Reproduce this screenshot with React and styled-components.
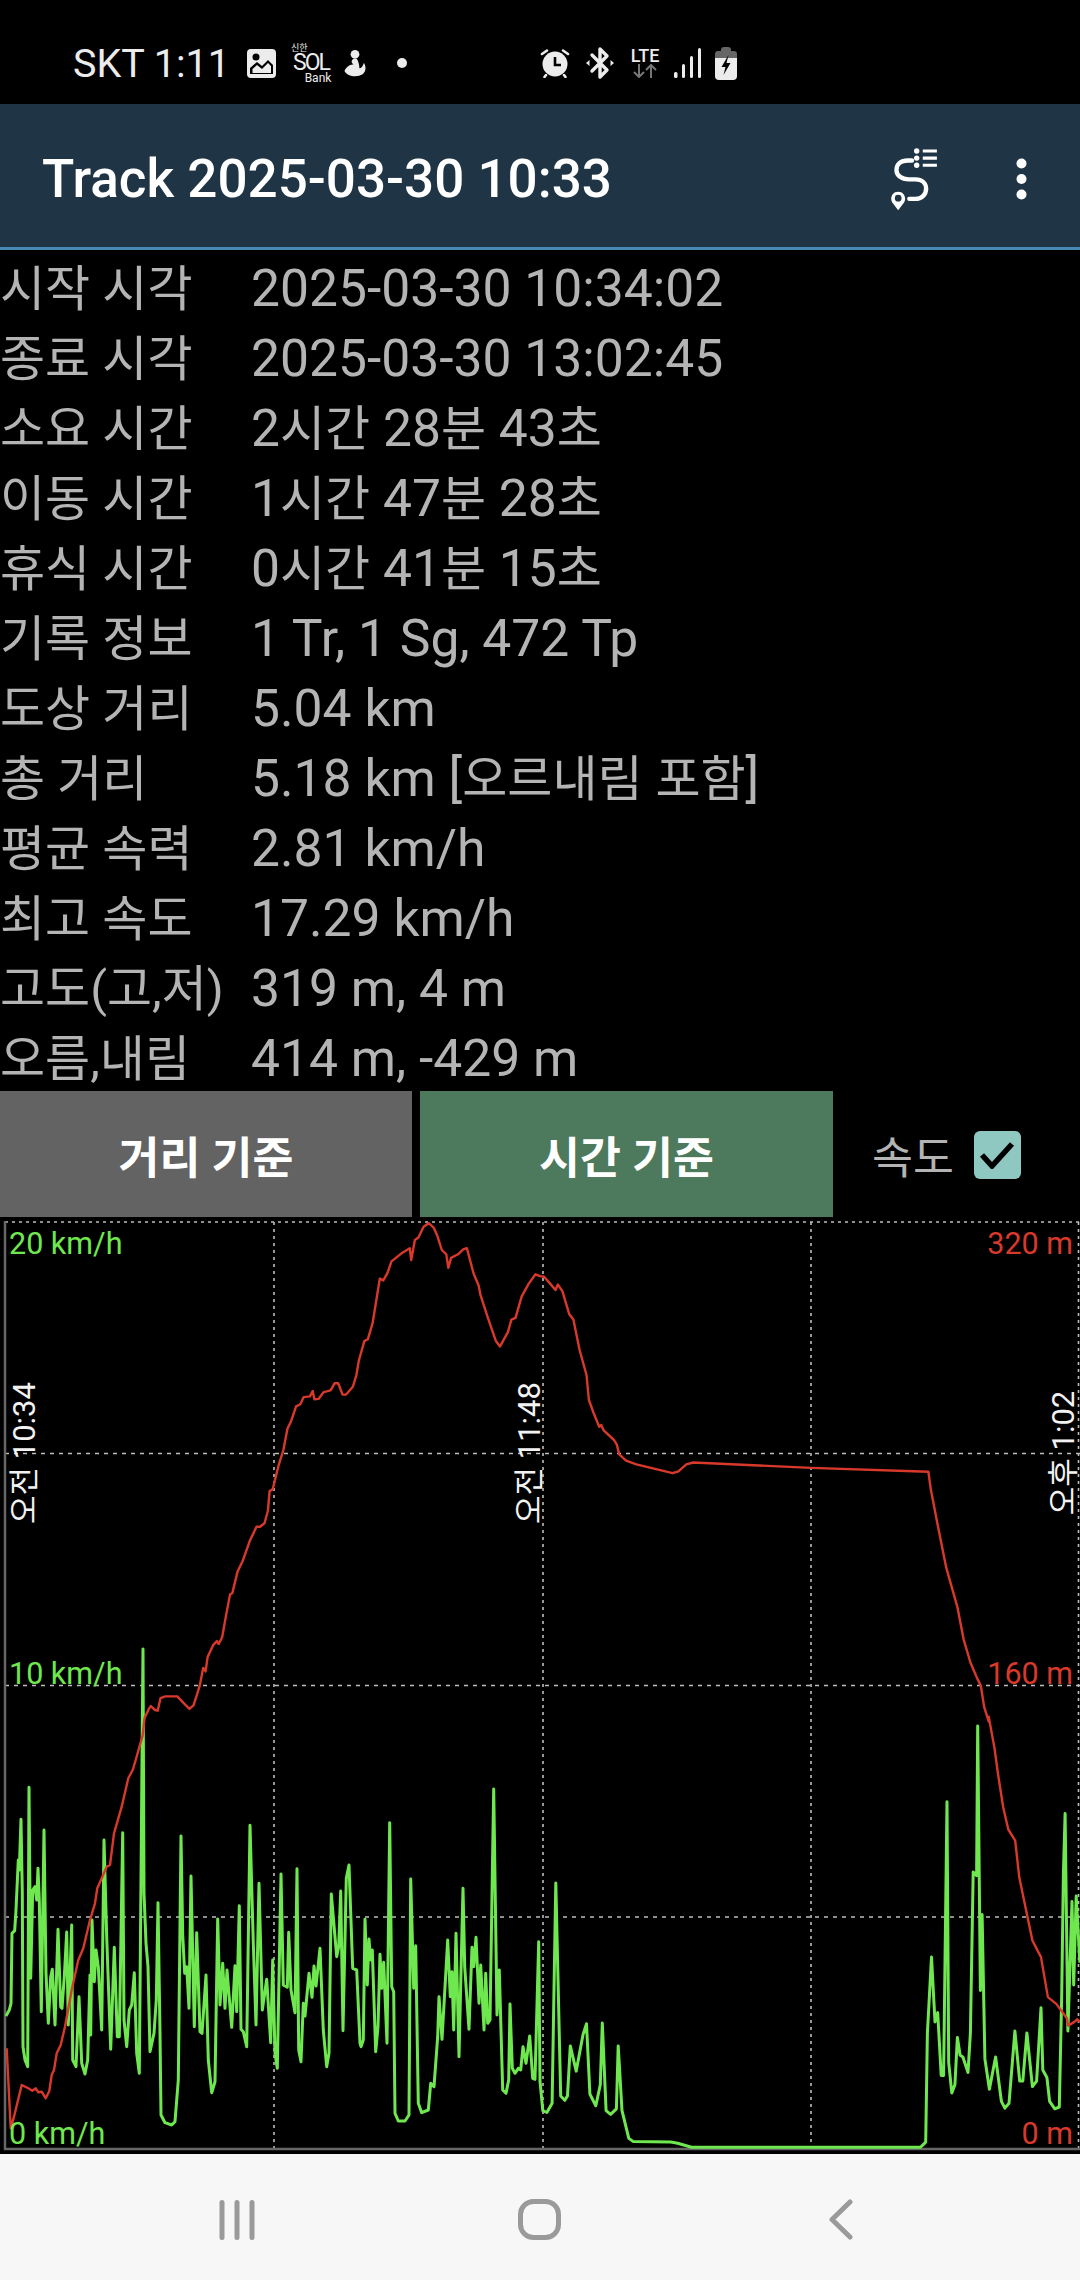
import React from 'react';
import styled, { createGlobalStyle } from 'styled-components';

const GlobalStyle = createGlobalStyle`
  html, body {
    margin: 0;
    padding: 0;
    background: #000;
  }
  body {
    font-family: Roboto, "Noto Sans CJK KR", sans-serif;
  }
`;

const Screen = styled.div`
  width: 1080px;
  height: 2280px;
  display: flex;
  flex-direction: column;
  background: #000;
  overflow: hidden;
`;

/* status bar */
const StatusBar = styled.div`
  height: 104px;
  box-sizing: border-box;
  flex: none;
  display: flex;
  align-items: center;
  padding: 22px 0 0 73px;
  color: #ececec;
`;

const StatusLeft = styled.div`
  width: 467px;
  display: flex;
  align-items: center;
`;

const StatusRight = styled.div`
  display: flex;
  align-items: center;
`;

const Clock = styled.span`
  font-size: 39.5px;
  width: 174px;
  white-space: nowrap;
`;

const SolLogo = styled.div`
  width: 56px;
  margin: 0 0 0 10px;
  display: flex;
  flex-direction: column;
  align-items: center;
`;

const SolTop = styled.span`
  font-size: 9px;
  line-height: 10px;
  align-self: flex-start;
  margin-left: 5px;
`;

const SolMid = styled.span`
  font-size: 23px;
  line-height: 19px;
  letter-spacing: -2px;
  margin-left: -6px;
`;

const SolBottom = styled.span`
  font-size: 12px;
  line-height: 12px;
  margin-left: 8px;
`;

const LteBox = styled.div`
  width: 30px;
  margin: 0 14px 0 16px;
  display: flex;
  flex-direction: column;
  align-items: center;
`;

const LteText = styled.span`
  font-size: 18px;
  font-weight: 500;
  line-height: 16px;
`;

/* app bar */
const AppBar = styled.header`
  height: 143px;
  flex: none;
  box-sizing: content-box;
  display: flex;
  align-items: center;
  justify-content: space-between;
  padding-left: 42px;
  background: #1f3546;
  border-bottom: 3px solid #4788b4;
`;

const Title = styled.h1`
  margin: 6px 0 0;
  font-size: 53px;
  font-weight: 500;
  color: #fff;
  white-space: nowrap;
`;

const Actions = styled.div`
  display: flex;
  align-items: center;
  gap: 78px;
  padding: 6px 53px 0 0;
`;

/* info table */
const InfoTable = styled.div`
  flex: none;
  box-sizing: border-box;
  height: 840px;
  padding-top: 4px;
  display: grid;
  grid-template-columns: 251px 1fr;
  grid-auto-rows: 70px;
  align-items: baseline;
  color: #b4b4b4;
  line-height: 70px;
  white-space: nowrap;
`;

const Label = styled.span`
  font-size: 49px;
`;

const Value = styled.span`
  font-size: 51.6px;
`;

// 한글은 숫자보다 글자 크기가 약간 작다
const Hangul = styled.span`
  font-size: 49px;
  line-height: 0;
`;

/* mode buttons */
const ModeRow = styled.div`
  height: 126px;
  flex: none;
  display: flex;
  gap: 8px;
  margin-top: 1px;
`;

const ModeButton = styled.button`
  width: ${(p) => (p.$active ? 413 : 412)}px;
  border: 0;
  padding: 0;
  background: ${(p) => (p.$active ? '#4d795c' : '#636363')};
  color: #fff;
  font-family: inherit;
  font-size: 44.5px;
  font-weight: 700;
`;

const SpeedToggle = styled.div`
  display: flex;
  align-items: center;
  margin-left: 31px;
  gap: 20px;
  color: #b4b4b4;
  font-size: 44.5px;
`;

const CheckBox = styled.span`
  width: 47px;
  height: 48px;
  margin-top: 2px;
  border-radius: 6px;
  background: #8fc7c1;
  display: flex;
  align-items: center;
  justify-content: center;
`;

/* chart */
const ChartBox = styled.div`
  position: relative;
  width: 1080px;
  height: 933px;
  flex: none;
  margin-top: 4px;
`;

const ChartSvg = styled.svg`
  display: block;
`;

const AxisLabel = styled.span`
  position: absolute;
  top: ${(p) => p.$top}px;
  ${(p) => (p.$right ? 'right: 7px;' : 'left: 9px;')}
  color: ${(p) => (p.$right ? '#d8392b' : '#6fe84f')};
  font-size: 30.5px;
  line-height: 36px;
  white-space: nowrap;
`;

const TimeLabel = styled.span`
  position: absolute;
  top: 232px;
  left: ${(p) => p.$left}px;
  color: #f2f2f2;
  font-size: 31px;
  line-height: 29px;
  white-space: nowrap;
  transform: translateY(-50%) rotate(180deg);
  writing-mode: vertical-rl;
  text-orientation: sideways;
`;

/* navigation bar */
const NavBar = styled.nav`
  flex: 1;
  display: grid;
  grid-template-columns: repeat(3, 302px);
  justify-content: center;
  justify-items: center;
  align-items: center;
  padding: 5px 2px 0 0;
  background: #f7f7f7;
`;

// 참조 이미지 좌표를 그대로 옮겨 적은 값
const toPath = ({ x0, y0, sx, sy, pts }) =>
  pts
    .map(([x, y]) => `${(x0 + x / sx).toFixed(1)},${(y0 + y / sy).toFixed(1)}`)
    .join(' ');

const greenParts = [
  {
    x0: 0, y0: 1760, sx: 3, sy: 3,
    pts: [[18,768],[28,750],[33,730],[36,520],[44,512],[48,450],[55,300],[58,330],[63,178],[67,400],[69,860],[75,900],[83,920],[87,82],[92,655],[98,390],[105,380],[110,420],[114,325],[118,420],[124,755],[132,210],[138,640],[145,790],[152,650],[157,628],[165,795],[174,508],[182,740],[186,745],[193,650],[200,516],[205,795],[215,495],[218,900],[228,920],[237,710],[245,910],[255,942],[263,900],[270,645],[272,825],[276,480],[283,665],[288,570],[295,620],[305,810],[312,240],[320,530],[332,868],[343,562],[352,830],[358,830],[368,218],[372,780],[380,860],[388,750],[395,735],[403,638],[410,880],[418,940],[429,-333],[432,400],[438,550],[444,620],[450,875],[462,820],[469,720],[474,428],[480,820],[483,1065],[495,1088],[515,1095],[525,1085],[535,960]],
  },
  {
    x0: 180, y0: 1760, sx: 3, sy: 3,
    pts: [[3,228],[8,525],[14,640],[20,620],[27,745],[33,348],[43,800],[50,518],[60,815],[66,820],[78,645],[85,900],[95,998],[105,965],[113,477],[120,735],[128,610],[135,745],[141,630],[155,802],[165,617],[170,755],[178,437],[183,808],[190,815],[200,860],[210,196],[220,550],[228,795],[237,370],[247,750],[260,658],[272,848],[278,600],[285,880],[292,925],[303,342],[310,675],[322,682],[326,517],[333,690],[345,758],[351,326],[356,870],[363,905],[370,730],[375,768],[387,640],[396,712],[402,618],[408,678],[420,565],[430,810],[440,920],[447,880],[454,402],[470,590],[476,560],[482,393],[489,812],[499,355],[507,315],[518,625],[530,630],[540,850]],
  },
  {
    x0: 360, y0: 1760, sx: 3, sy: 3,
    pts: [[3,860],[10,840],[15,478],[22,675],[27,537],[32,600],[37,570],[47,875],[54,800],[60,583],[65,685],[71,607],[81,850],[89,188],[95,680],[101,695],[105,1060],[115,1083],[135,1083],[147,1065],[152,357],[161,685],[167,557],[175,1030],[185,1058],[205,1050],[212,970],[222,980],[233,830],[237,710],[246,838],[263,540],[271,710],[276,635],[281,810],[288,520],[297,890],[309,385],[314,620],[327,808],[336,562],[341,620],[348,532],[357,730],[362,615],[372,810],[377,640],[383,790],[390,780],[401,87],[411,765],[418,630],[428,990],[438,1000],[446,960],[450,732],[457,925],[465,940],[475,925],[482,930],[489,860],[498,910],[509,828],[518,955],[525,958],[536,545]],
  },
  {
    x0: 540, y0: 1700, sx: 2.904, sy: 2.703,
    pts: [[0,1030],[8,1110],[20,1115],[35,1090],[46,495],[60,1070],[72,1082],[80,1070],[88,935],[105,1003],[125,905],[135,875],[145,1065],[162,1097],[175,1040],[181,873],[192,1110],[205,1120],[222,1105],[227,935],[238,1110],[258,1185],[270,1193],[380,1195],[400,1198],[440,1209],[1105,1209],[1120,1195],[1125,900],[1137,695],[1147,870],[1155,845],[1165,1015],[1172,1015],[1182,275],[1187,980],[1196,1062],[1205,1040],[1212,912],[1220,960],[1228,965],[1243,1007],[1250,900],[1258,465],[1268,475],[1271,70],[1279,785],[1284,580],[1292,970],[1305,1052],[1323,965],[1340,1085],[1350,1103],[1362,1090],[1379,895],[1393,1030],[1402,1030],[1414,900],[1430,1045],[1442,1030],[1455,832],[1460,1000],[1472,1020],[1480,1085],[1495,1105],[1508,1100],[1515,800],[1520,470],[1525,307],[1533,895],[1545,545],[1550,770],[1557,530],[1568,710]],
  },
];

const redParts = [
  {
    x0: 0, y0: 1760, sx: 3, sy: 3,
    pts: [[20,865],[32,1105],[42,1070],[65,975],[85,985],[97,992],[107,985],[115,997],[125,995],[137,1015],[148,993],[155,945],[162,930],[170,880],[182,855],[195,800],[215,690],[235,600],[250,565],[270,480],[285,430],[292,385],[305,355],[320,320],[330,315],[342,220],[365,140],[385,55],[398,30],[407,0]],
  },
  {
    x0: 0, y0: 1200, sx: 2.904, sy: 2.8,
    pts: [[414,1500],[420,1450],[432,1425],[438,1417],[450,1428],[458,1430],[466,1395],[480,1390],[515,1390],[537,1412],[550,1425],[562,1415],[572,1385],[580,1360],[590,1310],[597,1320],[603,1280],[620,1245],[630,1235],[635,1243],[645,1225],[655,1170],[668,1105],[675,1100],[690,1040],[705,1010],[725,955],[745,915],[755,915],[768,905],[778,870],[783,815],[792,810],[810,740],[823,700],[835,640],[845,620],[860,578],[872,572],[882,552],[900,550],[908,535],[913,558],[925,557],[940,538],[960,533],[972,513],[982,513],[995,545],[1005,545],[1025,522],[1035,490],[1042,450],[1058,395],[1068,390],[1082,345],[1103,220],[1113,225],[1125,205],[1137,172],[1165,150],[1190,135],[1194,168],[1205,112],[1215,105],[1230,75],[1245,65],[1260,78],[1270,100],[1283,140],[1296,152],[1302,190],[1310,162],[1330,152],[1345,138],[1356,135],[1375,205],[1390,240],[1395,265],[1415,325],[1440,395],[1452,410],[1475,370],[1485,335],[1497,330],[1515,270],[1535,235],[1555,208]],
  },
  {
    x0: 540, y0: 1200, sx: 2.904, sy: 2.8,
    pts: [[0,213],[12,215],[30,235],[45,252],[52,237],[65,255],[85,320],[97,335],[115,420],[135,490],[142,560],[155,595],[172,635],[178,630],[185,645],[215,672],[223,685],[230,712],[250,730],[280,740],[385,765],[402,760],[425,740],[445,735],[788,750],[1128,761],[1135,810],[1155,910],[1180,1030],[1212,1140],[1230,1230],[1250,1295],[1270,1340],[1280,1360],[1290,1420],[1303,1460]],
  },
  {
    x0: 540, y0: 1700, sx: 2.904, sy: 2.703,
    pts: [[1303,45],[1320,130],[1330,200],[1345,290],[1360,350],[1380,380],[1392,480],[1410,560],[1430,650],[1455,695],[1475,803],[1500,822],[1530,860],[1534,880],[1552,870],[1560,863],[1568,870]],
  },
];

const greenLine = greenParts.map(toPath).join(' ');
const redLine = redParts.map(toPath).join(' ');

const rows = [
  ['시작 시각', '2025-03-30 10:34:02'],
  ['종료 시각', '2025-03-30 13:02:45'],
  ['소요 시간', '2시간 28분 43초'],
  ['이동 시간', '1시간 47분 28초'],
  ['휴식 시간', '0시간 41분 15초'],
  ['기록 정보', '1 Tr, 1 Sg, 472 Tp'],
  ['도상 거리', '5.04 km'],
  ['총 거리', '5.18 km [오르내림 포함]'],
  ['평균 속력', '2.81 km/h'],
  ['최고 속도', '17.29 km/h'],
  ['고도(고,저)', '319 m, 4 m'],
  ['오름,내림', '414 m, -429 m'],
];

const GalleryIcon = () => (
  <svg width="29" height="29" viewBox="0 0 29 29">
    <rect width="29" height="29" rx="4" fill="#ececec" />
    <path d="M3 25 V19 L10 13 L15 17 L21 11 L26 16 V25 Z" fill="#000" />
    <path d="M5.5 24 V20 L10 16 L15 20 L21 14 L24 17 V24 Z" fill="#ececec" />
    <circle cx="9" cy="8" r="3.5" fill="#000" />
  </svg>
);

const SwanIcon = () => (
  <svg width="24" height="28" viewBox="0 0 26 32" style={{ marginLeft: 1 }}>
    <circle cx="13" cy="6" r="5" fill="#ececec" />
    <path
      d="M11 11 C8 14 9 16 12 18 C7 17 3 21 1 25 C3 29 8 31 13 31 C20 31 25 28 25 22 C25 19 24 17 23 16 C22 20 20 22 18 22 C18 18 17 14 15 11 Z"
      fill="#ececec"
    />
  </svg>
);

const AlarmIcon = () => (
  <svg width="30" height="30" viewBox="0 0 30 30">
    <circle cx="15" cy="16" r="12.5" fill="#ececec" />
    <path d="M15 9 V17 H21" fill="none" stroke="#000" strokeWidth="2.6" />
    <path d="M2 6 L7 2.5 M28 6 L23 2.5 M6 27 L4.5 29 M24 27 L25.5 29" stroke="#ececec" strokeWidth="2.6" strokeLinecap="round" />
  </svg>
);

const BluetoothIcon = () => (
  <svg width="28" height="34" viewBox="0 0 28 34" style={{ marginLeft: 16 }}>
    <path
      d="M6 9 L21 24 L14 31 V3 L21 10 L6 25"
      fill="none"
      stroke="#ececec"
      strokeWidth="3.4"
      strokeLinejoin="round"
      strokeLinecap="round"
    />
    <path d="M0 17 L3.5 14 V20 Z M28 17 L24.5 14 V20 Z" fill="#ececec" />
  </svg>
);

const LteArrows = () => (
  <svg width="24" height="14" viewBox="0 0 24 14">
    <path d="M6 0 V13 M1 8 L6 13 L11 8 M18 14 V1 M13 6 L18 1 L23 6" fill="none" stroke="#777" strokeWidth="2" />
  </svg>
);

const SignalIcon = () => (
  <svg width="27" height="30" viewBox="0 0 27 30">
    <rect x="0" y="24" width="3.5" height="6" rx="1.5" fill="#ececec" />
    <rect x="8" y="16" width="3" height="14" rx="1.5" fill="#ececec" />
    <rect x="16" y="8" width="3" height="22" rx="1.5" fill="#ececec" />
    <rect x="24" y="0" width="3" height="30" rx="1.5" fill="#ececec" />
  </svg>
);

const BatteryIcon = () => (
  <svg width="22" height="33" viewBox="0 0 22 33" style={{ marginLeft: 14 }}>
    <path d="M6 3 Q6 0 9 0 H13 Q16 0 16 3 V4 H19 Q22 4 22 7 V11 H0 V7 Q0 4 3 4 H6 Z" fill="#666" />
    <path d="M0 11 H22 V29 Q22 33 18 33 H4 Q0 33 0 29 Z" fill="#ececec" />
    <path d="M13.5 8 L6.5 20 H10.5 L8.5 28 L15.5 16 H11.5 Z" fill="#000" />
  </svg>
);

const RouteListIcon = () => (
  <svg width="48" height="64" viewBox="93 48 142 190">
    <path
      d="M158 88 H146 C124 88 112 100 112 116 C112 133 128 144 148 144 H168 C188 144 200 156 200 172 C200 190 186 202 168 202 H150"
      fill="none"
      stroke="#fff"
      strokeWidth="13"
      strokeLinecap="round"
    />
    <circle cx="172" cy="60" r="8" fill="#fff" />
    <circle cx="172" cy="81" r="8" fill="#fff" />
    <circle cx="172" cy="102" r="8" fill="#fff" />
    <path d="M190 60 H232 M190 81 H232 M190 102 H232" stroke="#fff" strokeWidth="9" />
    <path
      d="M117 236 L99 212 C92 200 99 181 117 181 C135 181 142 200 135 212 Z M117 190 A10 10 0 1 0 117.1 210 A10 10 0 1 0 117 190 Z"
      fill="#fff"
      fillRule="evenodd"
    />
  </svg>
);

const MoreIcon = () => (
  <svg width="11" height="42" viewBox="0 0 11 42">
    <circle cx="5.5" cy="5.5" r="5" fill="#fff" />
    <circle cx="5.5" cy="21" r="5" fill="#fff" />
    <circle cx="5.5" cy="36.5" r="5" fill="#fff" />
  </svg>
);

const CheckIcon = () => (
  <svg width="36" height="28" viewBox="0 0 36 28">
    <path d="M3 14 L13 25 L33 3" fill="none" stroke="#000" strokeWidth="5.5" />
  </svg>
);

const RecentsIcon = () => (
  <svg width="36" height="40" viewBox="0 0 36 40">
    <path d="M3 2.5 V37.5 M18 2.5 V37.5 M33 2.5 V37.5" stroke="#9a9a9a" strokeWidth="5" strokeLinecap="round" />
  </svg>
);

const HomeIcon = () => (
  <svg width="43" height="41" viewBox="0 0 43 41">
    <rect x="2.5" y="2.5" width="38" height="36" rx="13" fill="none" stroke="#9a9a9a" strokeWidth="5" />
  </svg>
);

const BackIcon = () => (
  <svg width="24" height="41" viewBox="0 0 24 41">
    <path d="M21 3 L3 20.5 L21 38" fill="none" stroke="#9a9a9a" strokeWidth="5" strokeLinecap="round" strokeLinejoin="round" />
  </svg>
);

const Chart = () => (
  <ChartSvg width="1080" height="933" viewBox="0 1221 1080 933">
    <g stroke="#bdbdbd" strokeWidth="1.6" strokeDasharray="3 4" fill="none">
      <path d="M5 1222 H1080" />
      <path d="M274 1222 V2149 M543 1222 V2149 M811 1222 V2149 M1078.5 1222 V2149" />
    </g>
    <g stroke="#bdbdbd" strokeWidth="1.4" strokeDasharray="4 5" fill="none">
      <path d="M5 1453.5 H1080 M5 1685.5 H1080 M5 1917 H1080" />
    </g>
    <path d="M5 1221 V2149 H1080" fill="none" stroke="#666" strokeWidth="2.5" />
    <polyline points={greenLine} fill="none" stroke="#6fe84f" strokeWidth="3" strokeLinejoin="round" />
    <polyline points={redLine} fill="none" stroke="#d8392b" strokeWidth="2.4" strokeLinejoin="round" />
  </ChartSvg>
);

// 값 문자열에서 한글 부분만 따로 감싼다
const renderValue = (value) =>
  value.split(/([가-힣]+)/).map((part, i) =>
    /[가-힣]/.test(part) ? <Hangul key={i}>{part}</Hangul> : part
  );

const App = () => (
  <Screen>
    <GlobalStyle />
    <StatusBar>
      <StatusLeft>
        <Clock>SKT 1:11</Clock>
        <GalleryIcon />
        <SolLogo>
          <SolTop>신한</SolTop>
          <SolMid>SOL</SolMid>
          <SolBottom>Bank</SolBottom>
        </SolLogo>
        <SwanIcon />
        <svg width="10" height="10" viewBox="0 0 10 10" style={{ marginLeft: 30 }}>
          <circle cx="5" cy="5" r="5" fill="#ececec" />
        </svg>
      </StatusLeft>
      <StatusRight>
        <AlarmIcon />
        <BluetoothIcon />
        <LteBox>
          <LteText>LTE</LteText>
          <LteArrows />
        </LteBox>
        <SignalIcon />
        <BatteryIcon />
      </StatusRight>
    </StatusBar>

    <AppBar>
      <Title>Track 2025-03-30 10:33</Title>
      <Actions>
        <RouteListIcon />
        <MoreIcon />
      </Actions>
    </AppBar>

    <InfoTable>
      {rows.map(([label, value]) => (
        <React.Fragment key={label}>
          <Label>{label}</Label>
          <Value>{renderValue(value)}</Value>
        </React.Fragment>
      ))}
    </InfoTable>

    <ModeRow>
      <ModeButton>거리 기준</ModeButton>
      <ModeButton $active>시간 기준</ModeButton>
      <SpeedToggle>
        속도
        <CheckBox>
          <CheckIcon />
        </CheckBox>
      </SpeedToggle>
    </ModeRow>

    <ChartBox>
      <Chart />
      <AxisLabel $top={5}>20 km/h</AxisLabel>
      <AxisLabel $top={435}>10 km/h</AxisLabel>
      <AxisLabel $top={895}>0 km/h</AxisLabel>
      <AxisLabel $right $top={5}>320 m</AxisLabel>
      <AxisLabel $right $top={435}>160 m</AxisLabel>
      <AxisLabel $right $top={895}>0 m</AxisLabel>
      <TimeLabel $left={10}>오전 10:34</TimeLabel>
      <TimeLabel $left={515}>오전 11:48</TimeLabel>
      <TimeLabel $left={1049}>오후 1:02</TimeLabel>
    </ChartBox>

    <NavBar>
      <RecentsIcon />
      <HomeIcon />
      <BackIcon />
    </NavBar>
  </Screen>
);

export default App;
